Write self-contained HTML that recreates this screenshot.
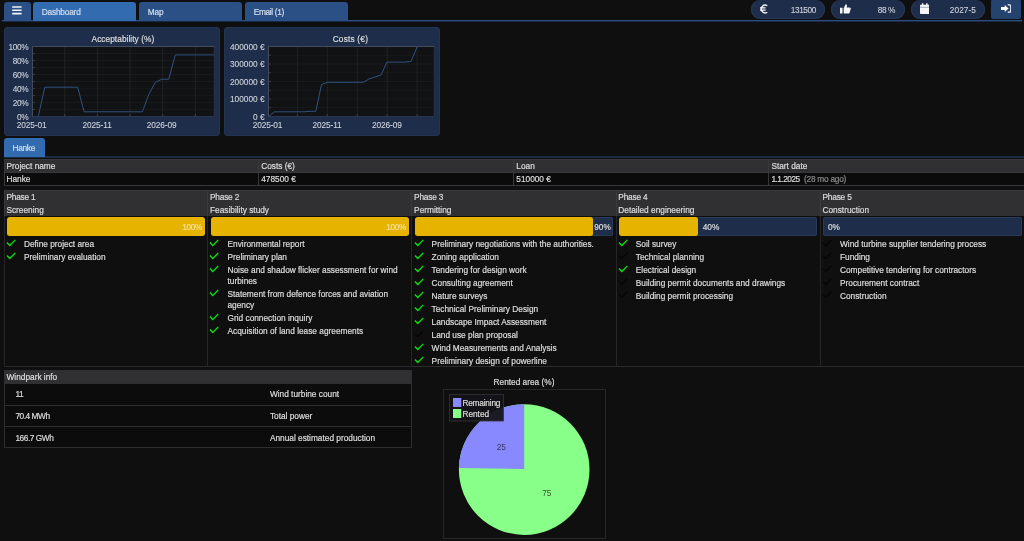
<!DOCTYPE html>
<html lang="en">
<head>
<meta charset="utf-8">
<title>Dashboard</title>
<style>
*{box-sizing:border-box;margin:0;padding:0}
html,body{width:1024px;height:541px;overflow:hidden;background:#0f0f0f;color:#dcdcdc;
  font-family:"Liberation Sans",sans-serif;font-size:8.3px;line-height:10px;-webkit-text-stroke:0.2px}
#app{position:absolute;left:0;top:0;width:1024px;height:541px;overflow:hidden;will-change:transform}
.a{position:absolute}
.t{position:absolute;white-space:nowrap;line-height:10px;height:10px}
.r{text-align:right}
.c{text-align:center}
.tab{position:absolute;top:2px;height:19px;background:#2a5085;border-radius:3px 3px 0 0;color:#d4dff0}
.tab.act{background:#336bb0}
.pill{position:absolute;top:0;height:19px;width:74px;border-radius:9.500px;background:#1e2d49;box-shadow:inset 0 -1px 0 0 #27395a,inset 1px 0 0 0 #27395a,inset -1px 0 0 0 #27395a;color:#cdd3de;-webkit-text-stroke:0.1px}
.dg{letter-spacing:-0.400px}
.dg2{letter-spacing:-0.100px}
.cl{color:#d3d8e0;-webkit-text-stroke:0.080px}
.panel{position:absolute;top:27px;width:216px;height:109px;background:#1e2d49;border:1px solid #223453;border-radius:3px}
.plot{position:absolute;background:#111214;overflow:hidden}
.hd{position:absolute;background:#303033}
.ln{position:absolute;background:#38383c}
.bar{position:absolute;top:217px;height:19px;width:198px;border-radius:2.500px;background:#1e2d49;box-shadow:inset 0 0 0 1px #293b5b;overflow:hidden}
.bar i{position:absolute;left:0;top:0;bottom:0;background:#e6b400;display:block;border-radius:2.500px}
.it{position:absolute;width:176px;line-height:11px;white-space:normal}
</style>
</head>
<body>
<div id="app">

<div class="a" style="left:2px;top:20px;width:1020px;height:1px;background:#2b4d80"></div>
<div class="a" style="left:2px;top:21px;width:1020px;height:1px;background:#182943"></div>
<div class="tab" style="left:4px;width:27px"><svg class="a" style="left:8px;top:4.400px" width="11" height="9" viewBox="0 0 11 9"><path d="M0.200 1h9.400M0.200 4.300h9.400M0.200 7.600h9.400" stroke="#f2f5fa" stroke-width="1.600"/></svg></div>
<div class="tab act" style="left:33px;width:103px"><span class="t" style="left:8.800px;top:4.500px;letter-spacing:-0.20px">Dashboard</span></div>
<div class="tab" style="left:139px;width:103px"><span class="t" style="left:8.800px;top:4.500px;letter-spacing:-0.10px">Map</span></div>
<div class="tab" style="left:245px;width:103px"><span class="t" style="left:8.800px;top:4.500px;letter-spacing:-0.35px">Email (1)</span></div>
<div class="pill" style="left:751px"><span class="t r dg" style="right:9px;top:4.800px">131500</span><svg class="a" style="left:8.500px;top:3.600px" width="8" height="10" viewBox="0 0 8 10"><path d="M7.300 1.700A3.900 3.900 0 1 0 7.300 8.300" fill="none" stroke="#f4f6fa" stroke-width="1.300"/><path d="M0 3.900H5.600M0 6.100H5.600" fill="none" stroke="#ffffff" stroke-width="1.150"/></svg></div>
<div class="pill" style="left:831px"><span class="t r dg" style="right:10px;top:4.800px">88 %</span><svg class="a" style="left:8.600px;top:3.600px" width="11" height="10" viewBox="0 0 11 10"><path d="M0 3.700h2.500v5.900H0zM3.600 4.400L5.600 0.300c1.300 0 1.700 1 1.300 2.100L6.600 3.500h3c1 0 1.400 0.800 1.100 1.500l-1.100 3.700c-0.200 0.600-0.600 0.900-1.200 0.900H4.800c-0.700 0-1.200-0.500-1.200-1.200z" fill="#f4f6fa"/></svg></div>
<div class="pill" style="left:911px"><span class="t r" style="right:9px;top:4.800px;letter-spacing:0.050px">2027-5</span><svg class="a" style="left:8.700px;top:2.900px" width="9.500" height="11" viewBox="0 0 9.500 11"><path d="M0 2.600a0.800 0.800 0 0 1 .8-.8h7.900a.8.800 0 0 1 .8.800v7.600a.8.800 0 0 1-.8.800H0.800a.8.800 0 0 1-.8-.8zM1.900 0.200h1.500v2H1.900zM6.100 0.200h1.500v2H6.100z" fill="#f4f6fa"/><path d="M0 4.300h9.500" stroke="#9aa3b5" stroke-width="0.900"/></svg></div>
<div class="a" style="left:991px;top:0;width:30px;height:19px;background:#24446f;border-radius:1px 1px 2px 2px"><svg class="a" style="left:9.800px;top:3.900px" width="10.600" height="9.300" viewBox="0 0 12 10"><path d="M0 3.200h4.200V0.800l4.400 4L4.200 8.800V6.400H0z" fill="#ffffff"/><path d="M7.600 0.800h1.900a1.600 1.600 0 0 1 1.600 1.600v5a1.600 1.600 0 0 1-1.600 1.600H7.600" fill="none" stroke="#f4f6fa" stroke-width="1.500"/></svg></div>
<div class="panel" style="left:4px"></div>
<div class="t c" style="left:62.9px;width:120px;top:34.300px;letter-spacing:0.050px">Acceptability (%)</div>
<svg class="a" style="left:32.0px;top:46.0px" width="182.8" height="71.0" viewBox="0 0 182.8 71.0">
<rect x="0" y="0" width="182.8" height="71.0" fill="#111214"/>
<path d="M0 0.50H182.8M0 7.50H182.8M0 14.50H182.8M0 21.50H182.8M0 28.50H182.8M0 35.50H182.8M0 42.50H182.8M0 49.50H182.8M0 56.50H182.8M0 63.50H182.8M0 70.50H182.8" stroke="#ffffff" stroke-opacity="0.035" stroke-width="1"/>
<path d="M32.70 0V71.0M65.40 0V71.0M98.00 0V71.0M130.70 0V71.0M163.40 0V71.0" stroke="#ffffff" stroke-opacity="0.065" stroke-width="1"/>
<path d="M0 0.50h3M0 7.50h3M0 14.50h3M0 21.50h3M0 28.50h3M0 35.50h3M0 42.50h3M0 49.50h3M0 56.50h3M0 63.50h3M0 70.50h3M32.70 71.0v-3M65.40 71.0v-3M98.00 71.0v-3M130.70 71.0v-3M163.40 71.0v-3" stroke="#ffffff" stroke-opacity="0.16" stroke-width="1"/>
<path d="M6.3 70.5 L12.8 41.2 L45.7 41.2 L52.1 65.8 L110.4 65.8 L116.8 48.5 L123.3 36.3 L129.8 33.2 L136.8 33.2 L143.3 8.9 L182.3 8.9" fill="none" stroke="#31507f" stroke-width="1" stroke-linejoin="round"/>
<path d="M182.8 0.500H0.500V71.0" fill="none" stroke="#434b5e" stroke-width="1"/>
<path d="M0.500 70.5H182.3V0.500" fill="none" stroke="#2b3850" stroke-width="1"/>
</svg>
<div class="t r cl" style="left:-21.6px;width:50px;top:111.5px;letter-spacing:-0.350px">0%</div>
<div class="t r cl" style="left:-21.6px;width:50px;top:97.5px;letter-spacing:-0.350px">20%</div>
<div class="t r cl" style="left:-21.6px;width:50px;top:83.5px;letter-spacing:-0.350px">40%</div>
<div class="t r cl" style="left:-21.6px;width:50px;top:69.5px;letter-spacing:-0.350px">60%</div>
<div class="t r cl" style="left:-21.6px;width:50px;top:55.5px;letter-spacing:-0.350px">80%</div>
<div class="t r cl" style="left:-21.6px;width:50px;top:41.5px;letter-spacing:-0.350px">100%</div>
<div class="t c dg2 cl" style="left:11.7px;width:40px;top:119.500px">2025-01</div>
<div class="t c dg2 cl" style="left:77.1px;width:40px;top:119.500px">2025-11</div>
<div class="t c dg2 cl" style="left:141.7px;width:40px;top:119.500px">2026-09</div>
<div class="panel" style="left:224px"></div>
<div class="t c" style="left:290.4px;width:120px;top:34.300px;letter-spacing:0.200px">Costs (€)</div>
<svg class="a" style="left:268.0px;top:46.0px" width="166.8" height="71.0" viewBox="0 0 166.8 71.0">
<rect x="0" y="0" width="166.8" height="71.0" fill="#111214"/>
<path d="M0 0.50H166.8M0 9.25H166.8M0 18.00H166.8M0 26.75H166.8M0 35.50H166.8M0 44.25H166.8M0 53.00H166.8M0 61.75H166.8M0 70.50H166.8" stroke="#ffffff" stroke-opacity="0.035" stroke-width="1"/>
<path d="M29.40 0V71.0M59.30 0V71.0M89.30 0V71.0M119.20 0V71.0M149.10 0V71.0" stroke="#ffffff" stroke-opacity="0.065" stroke-width="1"/>
<path d="M0 0.50h3M0 9.25h3M0 18.00h3M0 26.75h3M0 35.50h3M0 44.25h3M0 53.00h3M0 61.75h3M0 70.50h3M29.40 71.0v-3M59.30 71.0v-3M89.30 71.0v-3M119.20 71.0v-3M149.10 71.0v-3" stroke="#ffffff" stroke-opacity="0.16" stroke-width="1"/>
<path d="M0.7 70.5 L6.4 65.8 L36.1 65.8 L42.1 65.3 L47.8 65.3 L53.5 38.6 L59.4 36.3 L95.2 36.3 L101.6 32.7 L113.0 29.1 L119.0 16.1 L137.1 16.1 L143.0 15.4 L149.3 0.6 L155.0 -13.0" fill="none" stroke="#31507f" stroke-width="1" stroke-linejoin="round"/>
<path d="M166.8 0.500H0.500V71.0" fill="none" stroke="#434b5e" stroke-width="1"/>
<path d="M0.500 70.5H166.3V0.500" fill="none" stroke="#2b3850" stroke-width="1"/>
</svg>
<div class="t r cl" style="left:214.6px;width:50px;top:111.5px;letter-spacing:0px">0 €</div>
<div class="t r cl" style="left:214.6px;width:50px;top:94.0px;letter-spacing:0px">100000 €</div>
<div class="t r cl" style="left:214.6px;width:50px;top:76.5px;letter-spacing:0px">200000 €</div>
<div class="t r cl" style="left:214.6px;width:50px;top:59.0px;letter-spacing:0px">300000 €</div>
<div class="t r cl" style="left:214.6px;width:50px;top:41.5px;letter-spacing:0px">400000 €</div>
<div class="t c dg2 cl" style="left:247.5px;width:40px;top:119.500px">2025-01</div>
<div class="t c dg2 cl" style="left:307.0px;width:40px;top:119.500px">2025-11</div>
<div class="t c dg2 cl" style="left:366.8px;width:40px;top:119.500px">2026-09</div>
<div class="a" style="left:4px;top:156px;width:1020px;height:2px;background:#1b2c47"></div>
<div class="tab act" style="left:4px;top:138px;width:41px;height:19px"><span class="t" style="left:8.500px;top:5px;letter-spacing:-0.300px">Hanke</span></div>
<div class="hd" style="left:4px;top:159px;width:1020px;height:14px"></div>
<div class="a" style="left:4px;top:173px;width:1020px;height:12px;background:#0b0b0b"></div>
<div class="ln" style="left:4px;top:159px;width:1020px;height:1px"></div>
<div class="ln" style="left:4px;top:172px;width:1020px;height:1px"></div>
<div class="ln" style="left:4px;top:185px;width:1020px;height:1px"></div>
<div class="ln" style="left:4px;top:159px;width:1px;height:27px"></div>
<div class="ln" style="left:258px;top:159px;width:1px;height:27px"></div>
<div class="ln" style="left:513px;top:159px;width:1px;height:27px"></div>
<div class="ln" style="left:768px;top:159px;width:1px;height:27px"></div>
<div class="t" style="left:6.5px;top:160.800px">Project name</div>
<div class="t" style="left:6.5px;top:174px">Hanke</div>
<div class="t" style="left:261.2px;top:160.800px">Costs (€)</div>
<div class="t" style="left:261.2px;top:174px">478500 €</div>
<div class="t" style="left:516.3px;top:160.800px">Loan</div>
<div class="t" style="left:516.3px;top:174px">510000 €</div>
<div class="t" style="left:771.4px;top:160.800px">Start date</div>
<div class="t" style="left:771.4px;top:174px"><span style="letter-spacing:-0.500px">1.1.2025</span> <span style="color:#8a8a8a;letter-spacing:-0.250px">&nbsp;(28 mo ago)</span></div>
<div class="hd" style="left:4px;top:190px;width:1020px;height:26px"></div>
<div class="a" style="left:4px;top:190px;width:1020px;height:1px;background:#3a3a3e"></div>
<div class="a" style="left:4px;top:366px;width:1020px;height:1px;background:#2b2b2d"></div>
<div class="a" style="left:4px;top:190px;width:1px;height:26px;background:#3a3a3e"></div>
<div class="a" style="left:4px;top:216px;width:1px;height:151px;background:#262628"></div>
<div class="a" style="left:207px;top:190px;width:1px;height:26px;background:#3a3a3e"></div>
<div class="a" style="left:207px;top:216px;width:1px;height:151px;background:#262628"></div>
<div class="a" style="left:411px;top:190px;width:1px;height:26px;background:#3a3a3e"></div>
<div class="a" style="left:411px;top:216px;width:1px;height:151px;background:#262628"></div>
<div class="a" style="left:616px;top:190px;width:1px;height:26px;background:#3a3a3e"></div>
<div class="a" style="left:616px;top:216px;width:1px;height:151px;background:#262628"></div>
<div class="a" style="left:820px;top:190px;width:1px;height:26px;background:#3a3a3e"></div>
<div class="a" style="left:820px;top:216px;width:1px;height:151px;background:#262628"></div>
<div class="t" style="left:6.4px;top:191.500px;letter-spacing:-0.200px">Phase 1</div>
<div class="t" style="left:6.4px;top:204.700px">Screening</div>
<div class="bar" style="left:7px"><i style="width:198.0px"></i></div>
<div class="t r" style="left:162.0px;width:40px;top:221.500px;color:#f3dfa0;letter-spacing:-0.350px">100%</div>
<svg class="a" style="left:5.8px;top:238.8px" width="11" height="8" viewBox="0 0 11 8"><path d="M0.900 3.600L3.800 6.500L9.300 0.900" fill="none" stroke="#0ae30a" stroke-width="1.350"/></svg>
<div class="it" style="left:23.9px;top:238.5px">Define project area</div>
<svg class="a" style="left:5.8px;top:251.8px" width="11" height="8" viewBox="0 0 11 8"><path d="M0.900 3.600L3.800 6.500L9.300 0.900" fill="none" stroke="#0ae30a" stroke-width="1.350"/></svg>
<div class="it" style="left:23.9px;top:251.5px">Preliminary evaluation</div>
<div class="t" style="left:210.0px;top:191.500px;letter-spacing:-0.200px">Phase 2</div>
<div class="t" style="left:210.0px;top:204.700px">Feasibility study</div>
<div class="bar" style="left:211px"><i style="width:198.0px"></i></div>
<div class="t r" style="left:366.0px;width:40px;top:221.500px;color:#f3dfa0;letter-spacing:-0.350px">100%</div>
<svg class="a" style="left:209.4px;top:238.8px" width="11" height="8" viewBox="0 0 11 8"><path d="M0.900 3.600L3.800 6.500L9.300 0.900" fill="none" stroke="#0ae30a" stroke-width="1.350"/></svg>
<div class="it" style="left:227.5px;top:238.5px">Environmental report</div>
<svg class="a" style="left:209.4px;top:251.8px" width="11" height="8" viewBox="0 0 11 8"><path d="M0.900 3.600L3.800 6.500L9.300 0.900" fill="none" stroke="#0ae30a" stroke-width="1.350"/></svg>
<div class="it" style="left:227.5px;top:251.5px">Preliminary plan</div>
<svg class="a" style="left:209.4px;top:264.8px" width="11" height="8" viewBox="0 0 11 8"><path d="M0.900 3.600L3.800 6.500L9.300 0.900" fill="none" stroke="#0ae30a" stroke-width="1.350"/></svg>
<div class="it" style="left:227.5px;top:264.5px">Noise and shadow flicker assessment for wind turbines</div>
<svg class="a" style="left:209.4px;top:288.8px" width="11" height="8" viewBox="0 0 11 8"><path d="M0.900 3.600L3.800 6.500L9.300 0.900" fill="none" stroke="#0ae30a" stroke-width="1.350"/></svg>
<div class="it" style="left:227.5px;top:288.5px">Statement from defence forces and aviation agency</div>
<svg class="a" style="left:209.4px;top:312.8px" width="11" height="8" viewBox="0 0 11 8"><path d="M0.900 3.600L3.800 6.500L9.300 0.900" fill="none" stroke="#0ae30a" stroke-width="1.350"/></svg>
<div class="it" style="left:227.5px;top:312.5px">Grid connection inquiry</div>
<svg class="a" style="left:209.4px;top:325.8px" width="11" height="8" viewBox="0 0 11 8"><path d="M0.900 3.600L3.800 6.500L9.300 0.900" fill="none" stroke="#0ae30a" stroke-width="1.350"/></svg>
<div class="it" style="left:227.5px;top:325.5px">Acquisition of land lease agreements</div>
<div class="t" style="left:414.1px;top:191.500px;letter-spacing:-0.200px">Phase 3</div>
<div class="t" style="left:414.1px;top:204.700px">Permitting</div>
<div class="bar" style="left:415px"><i style="width:178.2px"></i></div>
<div class="t" style="left:594.2px;top:221.500px">90%</div>
<svg class="a" style="left:413.5px;top:238.8px" width="11" height="8" viewBox="0 0 11 8"><path d="M0.900 3.600L3.800 6.500L9.300 0.900" fill="none" stroke="#0ae30a" stroke-width="1.350"/></svg>
<div class="it" style="left:431.6px;top:238.5px">Preliminary negotiations with the authorities.</div>
<svg class="a" style="left:413.5px;top:251.8px" width="11" height="8" viewBox="0 0 11 8"><path d="M0.900 3.600L3.800 6.500L9.300 0.900" fill="none" stroke="#0ae30a" stroke-width="1.350"/></svg>
<div class="it" style="left:431.6px;top:251.5px">Zoning application</div>
<svg class="a" style="left:413.5px;top:264.8px" width="11" height="8" viewBox="0 0 11 8"><path d="M0.900 3.600L3.800 6.500L9.300 0.900" fill="none" stroke="#0ae30a" stroke-width="1.350"/></svg>
<div class="it" style="left:431.6px;top:264.5px">Tendering for design work</div>
<svg class="a" style="left:413.5px;top:277.8px" width="11" height="8" viewBox="0 0 11 8"><path d="M0.900 3.600L3.800 6.500L9.300 0.900" fill="none" stroke="#0ae30a" stroke-width="1.350"/></svg>
<div class="it" style="left:431.6px;top:277.5px">Consulting agreement</div>
<svg class="a" style="left:413.5px;top:290.8px" width="11" height="8" viewBox="0 0 11 8"><path d="M0.900 3.600L3.800 6.500L9.300 0.900" fill="none" stroke="#0ae30a" stroke-width="1.350"/></svg>
<div class="it" style="left:431.6px;top:290.5px">Nature surveys</div>
<svg class="a" style="left:413.5px;top:303.8px" width="11" height="8" viewBox="0 0 11 8"><path d="M0.900 3.600L3.800 6.500L9.300 0.900" fill="none" stroke="#0ae30a" stroke-width="1.350"/></svg>
<div class="it" style="left:431.6px;top:303.5px">Technical Preliminary Design</div>
<svg class="a" style="left:413.5px;top:316.8px" width="11" height="8" viewBox="0 0 11 8"><path d="M0.900 3.600L3.800 6.500L9.300 0.900" fill="none" stroke="#0ae30a" stroke-width="1.350"/></svg>
<div class="it" style="left:431.6px;top:316.5px">Landscape Impact Assessment</div>
<svg class="a" style="left:413.5px;top:329.8px" width="11" height="8" viewBox="0 0 11 8"><path d="M0.900 3.600L3.800 6.500L9.300 0.900" fill="none" stroke="#060606" stroke-width="1.350"/></svg>
<div class="it" style="left:431.6px;top:329.5px">Land use plan proposal</div>
<svg class="a" style="left:413.5px;top:342.8px" width="11" height="8" viewBox="0 0 11 8"><path d="M0.900 3.600L3.800 6.500L9.300 0.900" fill="none" stroke="#0ae30a" stroke-width="1.350"/></svg>
<div class="it" style="left:431.6px;top:342.5px">Wind Measurements and Analysis</div>
<svg class="a" style="left:413.5px;top:355.8px" width="11" height="8" viewBox="0 0 11 8"><path d="M0.900 3.600L3.800 6.500L9.300 0.900" fill="none" stroke="#0ae30a" stroke-width="1.350"/></svg>
<div class="it" style="left:431.6px;top:355.5px">Preliminary design of powerline</div>
<div class="t" style="left:618.3px;top:191.500px;letter-spacing:-0.200px">Phase 4</div>
<div class="t" style="left:618.3px;top:204.700px">Detailed engineering</div>
<div class="bar" style="left:619px"><i style="width:79.2px"></i></div>
<div class="t" style="left:702.7px;top:221.500px">40%</div>
<svg class="a" style="left:617.7px;top:238.8px" width="11" height="8" viewBox="0 0 11 8"><path d="M0.900 3.600L3.800 6.500L9.300 0.900" fill="none" stroke="#0ae30a" stroke-width="1.350"/></svg>
<div class="it" style="left:635.8px;top:238.5px">Soil survey</div>
<svg class="a" style="left:617.7px;top:251.8px" width="11" height="8" viewBox="0 0 11 8"><path d="M0.900 3.600L3.800 6.500L9.300 0.900" fill="none" stroke="#060606" stroke-width="1.350"/></svg>
<div class="it" style="left:635.8px;top:251.5px">Technical planning</div>
<svg class="a" style="left:617.7px;top:264.8px" width="11" height="8" viewBox="0 0 11 8"><path d="M0.900 3.600L3.800 6.500L9.300 0.900" fill="none" stroke="#0ae30a" stroke-width="1.350"/></svg>
<div class="it" style="left:635.8px;top:264.5px">Electrical design</div>
<svg class="a" style="left:617.7px;top:277.8px" width="11" height="8" viewBox="0 0 11 8"><path d="M0.900 3.600L3.800 6.500L9.300 0.900" fill="none" stroke="#060606" stroke-width="1.350"/></svg>
<div class="it" style="left:635.8px;top:277.5px">Building permit documents and drawings</div>
<svg class="a" style="left:617.7px;top:290.8px" width="11" height="8" viewBox="0 0 11 8"><path d="M0.900 3.600L3.800 6.500L9.300 0.900" fill="none" stroke="#060606" stroke-width="1.350"/></svg>
<div class="it" style="left:635.8px;top:290.5px">Building permit processing</div>
<div class="t" style="left:822.5px;top:191.500px;letter-spacing:-0.200px">Phase 5</div>
<div class="t" style="left:822.5px;top:204.700px">Construction</div>
<div class="bar" style="left:823px;width:199px"><i style="width:0.0px"></i></div>
<div class="t" style="left:828.0px;top:221.500px">0%</div>
<svg class="a" style="left:821.9px;top:238.8px" width="11" height="8" viewBox="0 0 11 8"><path d="M0.900 3.600L3.800 6.500L9.300 0.900" fill="none" stroke="#060606" stroke-width="1.350"/></svg>
<div class="it" style="left:840.0px;top:238.5px">Wind turbine supplier tendering process</div>
<svg class="a" style="left:821.9px;top:251.8px" width="11" height="8" viewBox="0 0 11 8"><path d="M0.900 3.600L3.800 6.500L9.300 0.900" fill="none" stroke="#060606" stroke-width="1.350"/></svg>
<div class="it" style="left:840.0px;top:251.5px">Funding</div>
<svg class="a" style="left:821.9px;top:264.8px" width="11" height="8" viewBox="0 0 11 8"><path d="M0.900 3.600L3.800 6.500L9.300 0.900" fill="none" stroke="#060606" stroke-width="1.350"/></svg>
<div class="it" style="left:840.0px;top:264.5px">Competitive tendering for contractors</div>
<svg class="a" style="left:821.9px;top:277.8px" width="11" height="8" viewBox="0 0 11 8"><path d="M0.900 3.600L3.800 6.500L9.300 0.900" fill="none" stroke="#060606" stroke-width="1.350"/></svg>
<div class="it" style="left:840.0px;top:277.5px">Procurement contract</div>
<svg class="a" style="left:821.9px;top:290.8px" width="11" height="8" viewBox="0 0 11 8"><path d="M0.900 3.600L3.800 6.500L9.300 0.900" fill="none" stroke="#060606" stroke-width="1.350"/></svg>
<div class="it" style="left:840.0px;top:290.5px">Construction</div>
<div class="hd" style="left:4px;top:370px;width:408px;height:14px"></div>
<div class="a" style="left:4px;top:384px;width:408px;height:64px;background:#0c0c0c"></div>
<div class="a" style="left:4px;top:370px;width:408px;height:1px;background:#2e2e30"></div>
<div class="a" style="left:4px;top:383px;width:408px;height:1px;background:#2e2e30"></div>
<div class="a" style="left:4px;top:405px;width:408px;height:1px;background:#2e2e30"></div>
<div class="a" style="left:4px;top:426px;width:408px;height:1px;background:#2e2e30"></div>
<div class="a" style="left:4px;top:447px;width:408px;height:1px;background:#2e2e30"></div>
<div class="a" style="left:4px;top:370px;width:1px;height:78px;background:#2e2e30"></div>
<div class="a" style="left:411px;top:370px;width:1px;height:78px;background:#2e2e30"></div>
<div class="t" style="left:6.500px;top:372.300px">Windpark info</div>
<div class="t" style="left:15.400px;top:389.0px;letter-spacing:-0.450px">11</div>
<div class="t" style="left:269.900px;top:389.0px">Wind turbine count</div>
<div class="t" style="left:15.400px;top:410.8px;letter-spacing:-0.450px">70.4 MWh</div>
<div class="t" style="left:269.900px;top:410.8px">Total power</div>
<div class="t" style="left:15.400px;top:432.5px;letter-spacing:-0.450px">166.7 GWh</div>
<div class="t" style="left:269.900px;top:432.5px">Annual estimated production</div>
<div class="t c" style="left:464px;width:120px;top:376.500px">Rented area (%)</div>
<div class="a" style="left:443px;top:389px;width:163px;height:150px;border:1px solid #26262b"></div>
<svg class="a" style="left:443px;top:389px" width="163" height="152" viewBox="443 389 163 152"><circle cx="524.200" cy="469.600" r="65.300" fill="#88ff88"/><path d="M524.200 469.100V404.300A65.300 65.300 0 0 0 458.900 468z" fill="#8888ff"/><rect x="449.500" y="394.500" width="54" height="26.500" fill="#141418" fill-opacity="0.940" stroke="#34343a" stroke-width="0.800"/><rect x="453" y="398" width="8.300" height="9" fill="#8888ff"/><rect x="453" y="409" width="8.300" height="9" fill="#88ff88"/></svg>
<div class="t" style="left:462.400px;top:398px;letter-spacing:-0.200px">Remaining</div>
<div class="t" style="left:462.400px;top:408.700px">Rented</div>
<div class="t c" style="left:481.300px;width:40px;top:442px;color:#38385c;-webkit-text-stroke:0">25</div>
<div class="t c" style="left:526.800px;width:40px;top:488.300px;color:#385438;-webkit-text-stroke:0">75</div>
</div>
</body>
</html>
